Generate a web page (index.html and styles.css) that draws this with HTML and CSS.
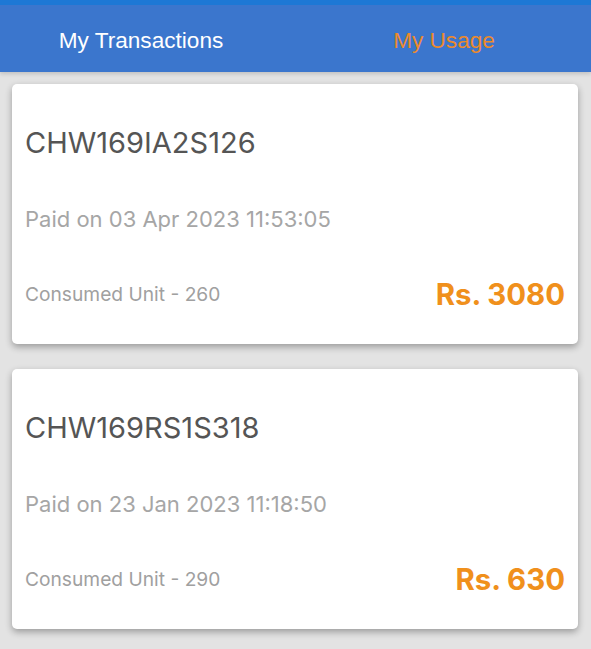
FILE: index.html
```html
<!DOCTYPE html>
<html>
<head>
<meta charset="utf-8">
<link rel="stylesheet" href="styles.css">
</head>
<body>
<header class="tabs">
  <div class="tab">My Transactions</div>
  <div class="tab active">My Usage</div>
</header>
<main class="list">
  <section class="card">
    <div class="card-id">CHW169IA2S126</div>
    <div class="card-date">Paid on 03 Apr 2023 11:53:05</div>
    <div class="card-row">
      <span class="card-unit">Consumed Unit - 260</span>
      <span class="card-amount">Rs. 3080</span>
    </div>
  </section>
  <section class="card">
    <div class="card-id">CHW169RS1S318</div>
    <div class="card-date">Paid on 23 Jan 2023 11:18:50</div>
    <div class="card-row">
      <span class="card-unit">Consumed Unit - 290</span>
      <span class="card-amount">Rs. 630</span>
    </div>
  </section>
</main>
</body>
</html>
```
FILE: styles.css
```css
html, body {
  margin: 0;
  padding: 0;
}
body {
  background: #e3e3e3;
  font-family: Inter, Roboto, "Liberation Sans", sans-serif;
  width: 591px;
  height: 649px;
  overflow: hidden;
}
.tabs {
  display: flex;
  align-items: center;
  height: 67px;
  background: #3b76cd;
  border-top: 5px solid #1d78d5;
  box-shadow: 0 2px 4px rgba(0,0,0,0.15);
}
.tab {
  flex: 1;
  text-align: center;
  font-family: "Liberation Sans", Arial, sans-serif;
  font-size: 22.6px;
  color: #ffffff;
  line-height: 26px;
  padding-top: 4px;
}
.tab:first-child {
  padding-right: 21px;
}
.tab.active {
  color: #ec8a2c;
  padding-right: 6px;
}
.list {
  display: flex;
  flex-direction: column;
  gap: 25px;
  padding: 12px 13px 0 12px;
}
.card {
  background: #ffffff;
  border-radius: 5px;
  box-shadow: 0 3px 7px rgba(0,0,0,0.32);
  padding: 42px 13px 33px 13px;
  height: 260px;
  box-sizing: border-box;
}
.card-id {
  font-size: 29px;
  line-height: 34px;
  color: #555555;
}
.card-date {
  margin-top: 46px;
  font-size: 22px;
  line-height: 26px;
  color: #a6a6a6;
}
.card-row {
  margin-top: 45px;
  display: flex;
  justify-content: space-between;
  align-items: center;
  height: 34px;
}
.card-unit {
  font-size: 19.2px;
  color: #a0a0a0;
}
.card-amount {
  font-size: 29.4px;
  font-weight: bold;
  color: #f0901c;
}
```
